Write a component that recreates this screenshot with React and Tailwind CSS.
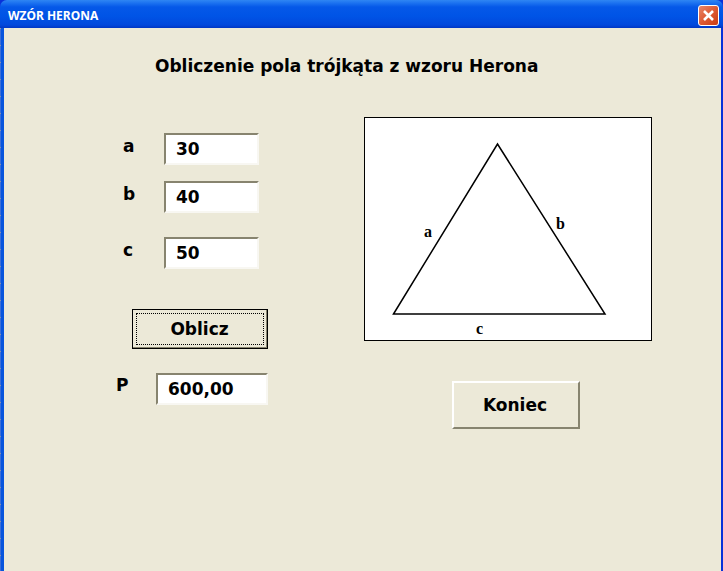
const font = { fontFamily: '"DejaVu Sans", Verdana, sans-serif' };

const Field = ({ value, className = "" }) => (
  <div
    className={`h-[32px] bg-white border-2 border-t-[#87846f] border-l-[#87846f] border-r-[#f8f7f2] border-b-[#f8f7f2] pl-[10px] text-[17px] leading-[28px] font-bold text-black ${className}`}
  >
    {value}
  </div>
);

const Triangle = () => (
  <div className="w-[288px] h-[224px] bg-white border border-black">
    <svg width="286" height="222" viewBox="365 118 286 222" className="block">
      <path
        d="M393.5 314 L497.5 144 L605 314 Z"
        fill="none"
        stroke="#000"
        strokeWidth="1.5"
      />
      <text x="424" y="237" fontFamily="Liberation Serif" fontWeight="700" fontSize="16">a</text>
      <text x="556" y="229" fontFamily="Liberation Serif" fontWeight="700" fontSize="16">b</text>
      <text x="476" y="334" fontFamily="Liberation Serif" fontWeight="700" fontSize="16">c</text>
    </svg>
  </div>
);

const App = () => {
  return (
    <div className="w-[723px] h-[571px] overflow-hidden flex flex-col bg-[#0831d9]" style={font}>
      {/* Title bar */}
      <div className="h-[28px] shrink-0 flex items-start justify-between pt-[5px] pl-[8px] pr-[4px] rounded-t-[7px] bg-[linear-gradient(to_bottom,#2f86f3_0px,#1c72f0_3px,#0558e8_7px,#0054e6_16px,#0148dc_25px,#0036c4_28px)]">
        <span className="text-[12px] leading-[22px] font-bold text-white" style={{ fontFamily: '"Noto Sans", sans-serif' }}>
          WZÓR HERONA
        </span>
        <div className="w-[21px] h-[21px] rounded-[3px] border border-white bg-[linear-gradient(135deg,#e8876a,#dd5a34_50%,#c93c12)] flex items-center justify-center">
          <svg width="13" height="13" viewBox="0 0 13 13">
            <path d="M2 2 L11 11 M11 2 L2 11" stroke="#fff" strokeWidth="2.6" />
          </svg>
        </div>
      </div>

      {/* Body */}
      <div className="flex-1 flex mr-[2px] text-black">
        {/* Left window edge with its tick marks */}
        <div className="w-[4px] shrink-0 bg-[#0855dd] flex">
          <div className="w-[1px] h-full bg-[repeating-linear-gradient(to_bottom,#8a93a8_0px,#8a93a8_1px,#3d6fd8_1px,#3d6fd8_17px)]" />
        </div>
        <div className="flex-1 bg-[#ece9d8]">
          <h1 className="pt-[27px] pl-[151px] text-[17px] leading-[22px] font-bold">
            Obliczenie pola trójkąta z wzoru Herona
          </h1>

          <div className="flex mt-[40px]">
            {/* Left column */}
            <div className="w-[360px] pt-[16px]">
              <div className="flex items-start pl-[119px]">
                <span className="w-[41px] text-[17px] leading-[26px] font-bold">a</span>
                <Field value="30" className="w-[95px]" />
              </div>
              <div className="flex items-start pl-[119px] mt-[16px]">
                <span className="w-[41px] text-[17px] leading-[26px] font-bold">b</span>
                <Field value="40" className="w-[95px]" />
              </div>
              <div className="flex items-start pl-[119px] mt-[24px]">
                <span className="w-[41px] text-[17px] leading-[26px] font-bold">c</span>
                <Field value="50" className="w-[95px]" />
              </div>
              <div className="pl-[128px] mt-[40px]">
                <div className="w-[136px] h-[40px] border border-black bg-[#ece9d8] shadow-[inset_-1px_-1px_0_#87846f] p-[3px]">
                  <div className="h-full pt-[2px] pr-[1px] border border-dotted border-black flex items-center justify-center text-[17px] font-bold">
                    Oblicz
                  </div>
                </div>
              </div>
              <div className="flex items-start pl-[112px] mt-[24px]">
                <span className="w-[40px] text-[17px] leading-[25px] font-bold">P</span>
                <Field value="600,00" className="w-[112px]" />
              </div>
            </div>

            {/* Right column */}
            <div className="flex flex-col">
              <Triangle />
              <div className="pl-[88px] mt-[40px]">
                <div className="w-[128px] h-[48px] pt-[1px] pr-[2px] border-2 border-t-white border-l-white border-r-[#87846f] border-b-[#87846f] flex items-center justify-center text-[17px] font-bold">
                  Koniec
                </div>
              </div>
            </div>
          </div>
        </div>
      </div>
    </div>
  );
};

export default App;
